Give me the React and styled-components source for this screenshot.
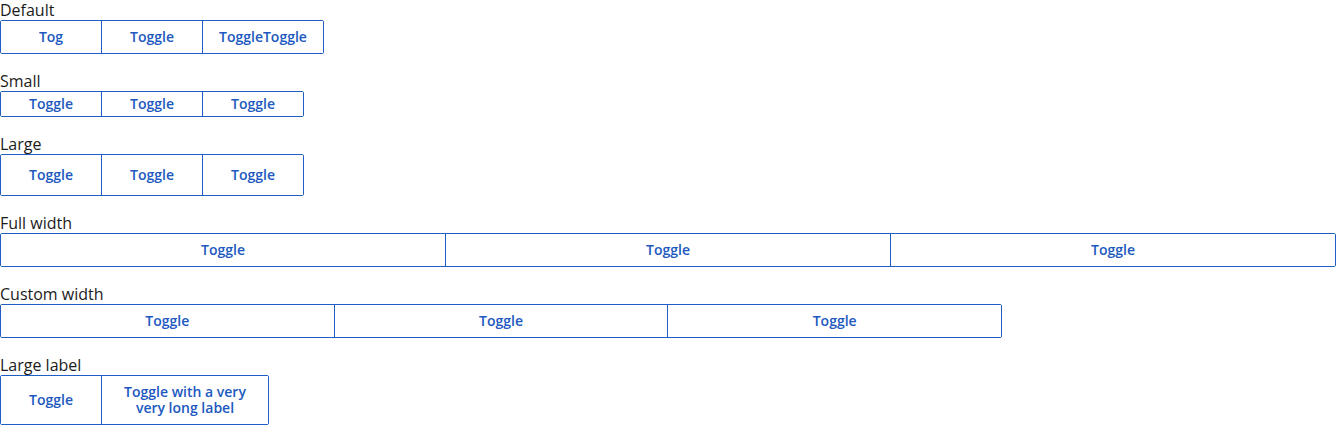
import React from "react";
import styled, { createGlobalStyle } from "styled-components";

const GlobalStyle = createGlobalStyle`
  body {
    margin: 0;
    font-family: "Open Sans", "Noto Sans", sans-serif;
    background: #ffffff;
    color: #1b1b1b;
  }
`;

const heights = { small: 24, medium: 32, large: 40, xlarge: 48 };

const Page = styled.div`
  display: flex;
  flex-direction: column;
  gap: 17px;
`;

const Section = styled.div`
  display: flex;
  flex-direction: column;
`;

const Label = styled.div`
  font-size: 16px;
  line-height: 20px;
  height: 20px;
  color: #1b1b1b;
`;

const Group = styled.div`
  display: ${(p) => (p.$width ? "flex" : "inline-flex")};
  align-self: flex-start;
  width: ${(p) => p.$width || "auto"};
  border: 1px solid #1f5cc4;
  border-radius: 2px;
  box-sizing: border-box;
`;

const Toggle = styled.button`
  flex: ${(p) => (p.$grow ? "1 1 0" : "0 0 auto")};
  min-width: 100px;
  max-width: ${(p) => (p.$maxWidth ? p.$maxWidth : "none")};
  height: ${(p) => heights[p.$size || "medium"]}px;
  padding: 0 16px;
  box-sizing: border-box;
  border: none;
  border-left: 1px solid #1f5cc4;
  background: #ffffff;
  color: #2159c0;
  font-family: "Open Sans", "Noto Sans", sans-serif;
  font-size: 14px;
  font-weight: 600;
  line-height: 16px;
  text-align: center;
  cursor: pointer;

  &:first-child {
    border-left: none;
  }

  & + & {
    min-width: 101px;
  }
`;

const App = () => {
  return (
    <Page>
      <GlobalStyle />
      <Section>
        <Label>Default</Label>
        <Group>
          <Toggle>Tog</Toggle>
          <Toggle>Toggle</Toggle>
          <Toggle>ToggleToggle</Toggle>
        </Group>
      </Section>
      <Section>
        <Label>Small</Label>
        <Group>
          <Toggle $size="small">Toggle</Toggle>
          <Toggle $size="small">Toggle</Toggle>
          <Toggle $size="small">Toggle</Toggle>
        </Group>
      </Section>
      <Section>
        <Label>Large</Label>
        <Group>
          <Toggle $size="large">Toggle</Toggle>
          <Toggle $size="large">Toggle</Toggle>
          <Toggle $size="large">Toggle</Toggle>
        </Group>
      </Section>
      <Section>
        <Label>Full width</Label>
        <Group $width="100%">
          <Toggle $grow>Toggle</Toggle>
          <Toggle $grow>Toggle</Toggle>
          <Toggle $grow>Toggle</Toggle>
        </Group>
      </Section>
      <Section>
        <Label>Custom width</Label>
        <Group $width="75%">
          <Toggle $grow>Toggle</Toggle>
          <Toggle $grow>Toggle</Toggle>
          <Toggle $grow>Toggle</Toggle>
        </Group>
      </Section>
      <Section>
        <Label>Large label</Label>
        <Group>
          <Toggle $size="xlarge">Toggle</Toggle>
          <Toggle $size="xlarge" $maxWidth="167px">
            Toggle with a very very long label
          </Toggle>
        </Group>
      </Section>
    </Page>
  );
};

export default App;
